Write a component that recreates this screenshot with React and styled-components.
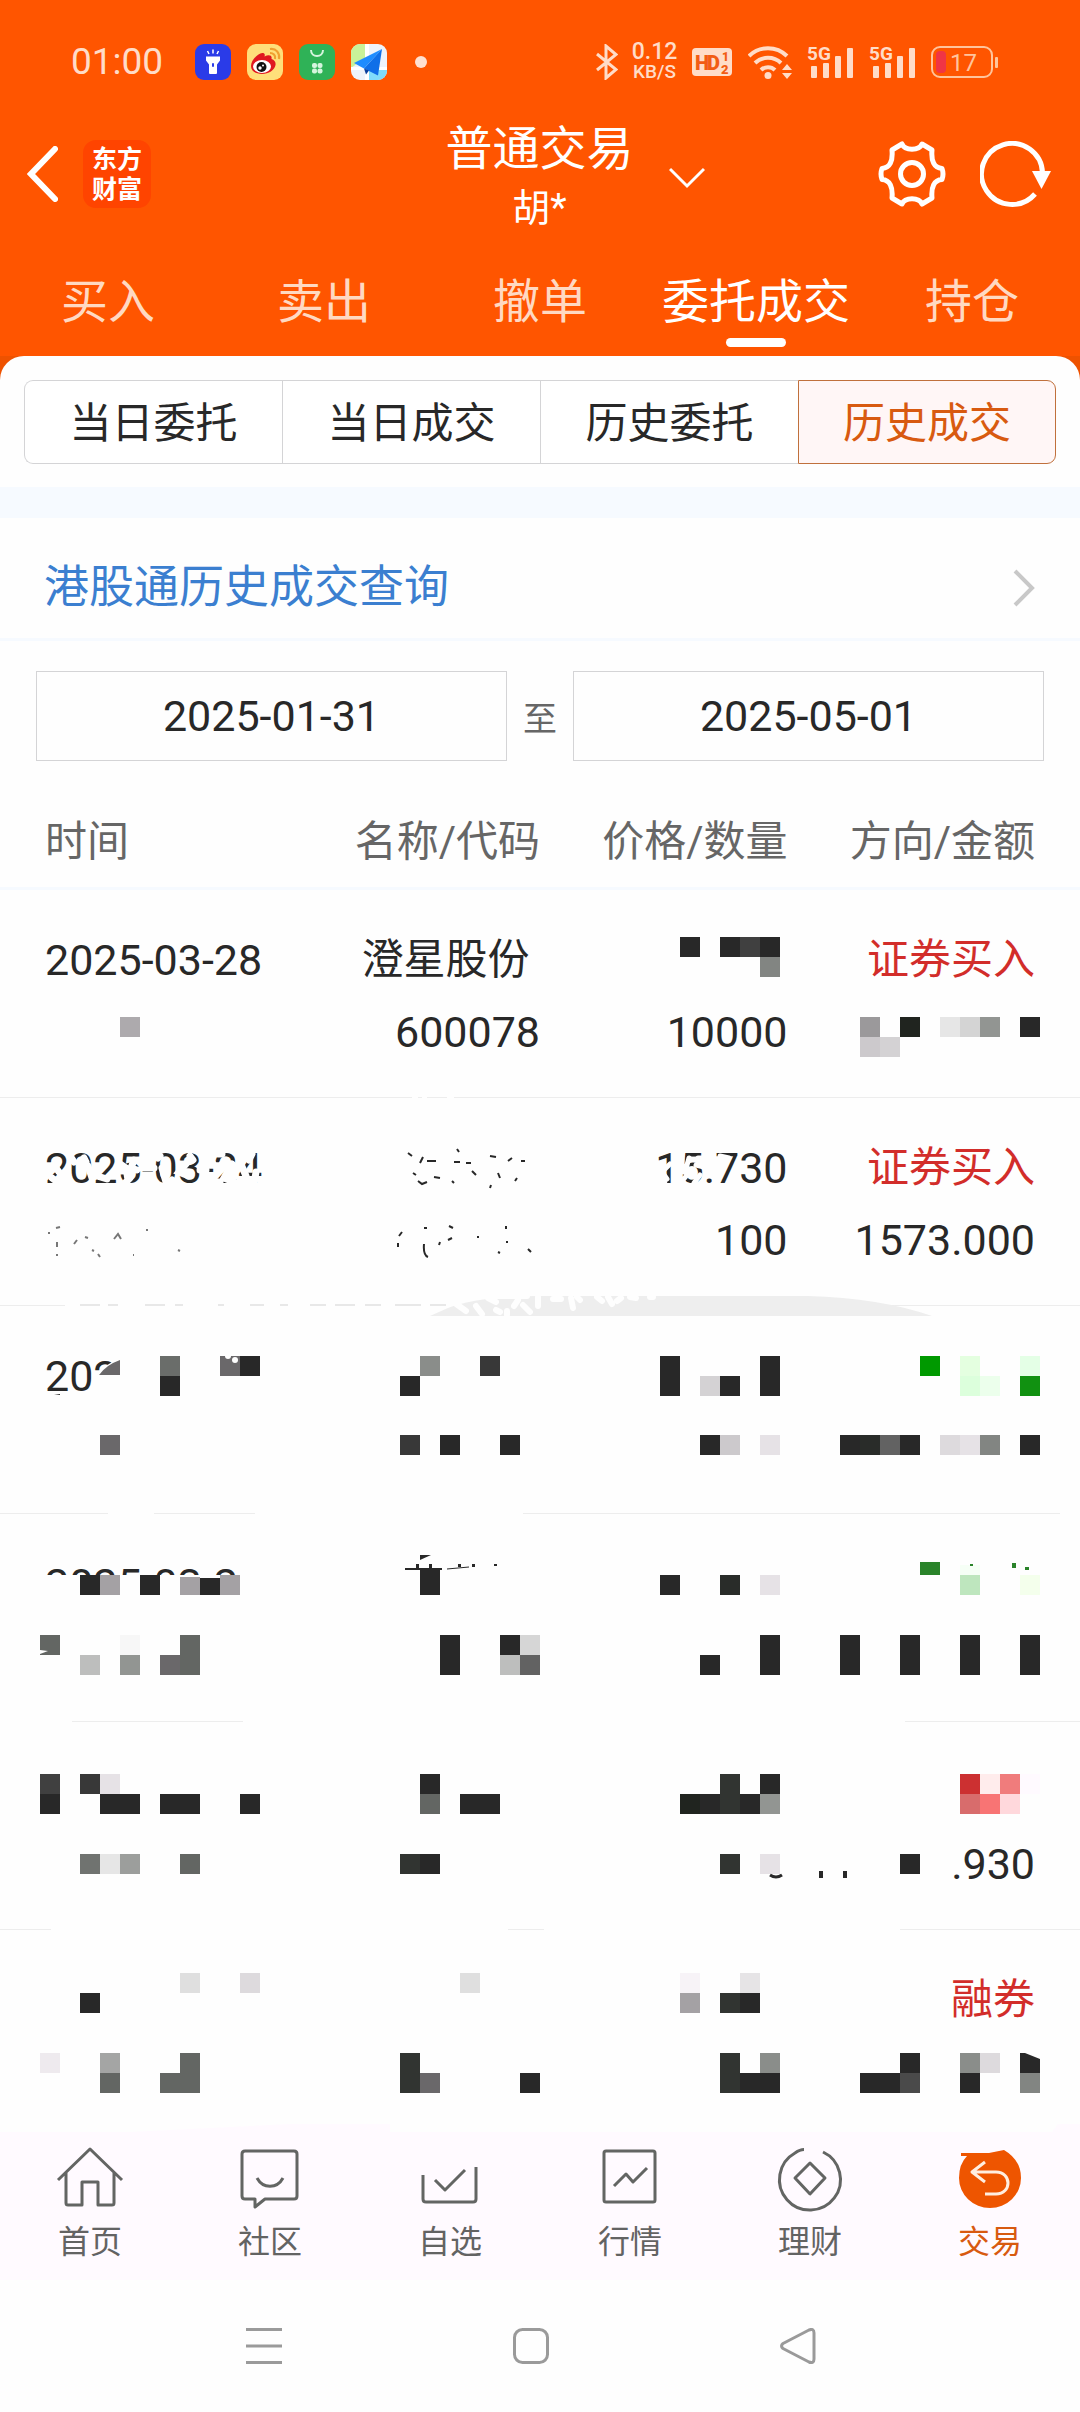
import React, { useState } from 'react';
import styled, { createGlobalStyle } from 'styled-components';

const GlobalStyle = createGlobalStyle`
  * {
    box-sizing: border-box;
  }

  body {
    margin: 0;
    background: #fefefe;
    font-family: Roboto, 'Noto Sans CJK SC', sans-serif;
    color: #282828;
  }

  button, input {
    font-family: inherit;
    color: inherit;
    border: 0;
    padding: 0;
    margin: 0;
    background: none;
  }

  svg {
    display: block;
    flex: none;
  }
`;

const Page = styled.div`
  min-height: 100vh;
  display: flex;
  flex-direction: column;
`;

const Header = styled.header`
  background: #ff5500;
  color: #fff;
`;

const StatusBar = styled.div`
  height: 124px;
  padding: 0 82px 0 71px;
  display: flex;
  align-items: center;
  justify-content: space-between;
  color: #ffdcc8;
`;

const StatusGroup = styled.div`
  display: flex;
  align-items: center;
  gap: ${props => props.$tight ? '15px' : '16px'};
`;

const Clock = styled.span`
  width: 108px;
  font-size: 37px;
  line-height: 44px;
`;

const MoreDot = styled.span`
  width: 12px;
  height: 12px;
  margin-left: 12px;
  border-radius: 50%;
  background: #ffe0d0;
`;

const NetSpeed = styled.span`
  width: 43px;
  display: flex;
  flex-direction: column;
  align-items: center;
  font-size: 23px;
  font-weight: 500;
  line-height: 20px;

  small {
    font-size: 19px;
    line-height: 20px;
  }
`;

const TitleBar = styled.div`
  height: 100px;
  padding: 0 28px 0 27px;
  display: grid;
  grid-template-columns: 1fr auto 1fr;
  grid-template-rows: 100px;
  align-items: center;
`;

const TitleSide = styled.div`
  display: flex;
  align-items: center;
  justify-content: ${props => props.$end ? 'flex-end' : 'flex-start'};
  gap: ${props => props.$end ? '34px' : '25px'};
`;

const IconButton = styled.button`
  display: block;
  cursor: pointer;
`;

const Logo = styled.span`
  width: 68px;
  height: 68px;
  padding-top: 5px;
  border-radius: 13px;
  background: #ff4400;
  font-size: 25px;
  font-weight: 700;
  line-height: 30px;
  text-align: center;
`;

const AccountButton = styled.button`
  display: flex;
  align-items: center;
  gap: 35px;
  padding: 8px 0 0 71px;
`;

const AccountText = styled.span`
  display: flex;
  flex-direction: column;
  font-size: 47px;
  line-height: 60px;

  small {
    font-size: 38px;
    line-height: 58px;
  }
`;

const Tabs = styled.nav`
  display: grid;
  grid-template-columns: repeat(5, 1fr);
  padding: 46px 0 9px;
`;

const Tab = styled.a`
  display: flex;
  flex-direction: column;
  align-items: center;
  gap: 4px;
  color: ${props => props.$active ? '#fff' : '#ffd9c2'};
  font-size: 47px;
  line-height: 64px;
  text-decoration: none;

  &::after {
    content: '';
    width: 60px;
    height: 9px;
    border-radius: 5px;
    background: ${props => props.$active ? '#fff' : 'transparent'};
  }
`;

const PanelBack = styled.div`
  background: #ee5200;
`;

const Panel = styled.div`
  padding: 24px 24px 23px;
  border-radius: 24px 24px 0 0;
  background: #fefefe;
`;

const Segments = styled.div`
  display: grid;
  grid-template-columns: repeat(4, 1fr);
`;

const Segment = styled.button`
  height: 84px;
  padding-top: 4px;
  border: 1px solid ${props => props.$active ? '#c0703c' : '#d4d4d6'};
  border-right-width: ${props => props.$last ? '1px' : '0'};
  border-radius: ${props => props.$first ? '9px 0 0 9px' : props.$last ? '0 9px 9px 0' : '0'};
  background: ${props => props.$active ? '#fff6f6' : '#fff'};
  color: ${props => props.$active ? '#d85a10' : '#282828'};
  font-size: 42px;
  line-height: 60px;
`;

const Band = styled.div`
  height: 31px;
  background: #f6faff;
`;

const HkLink = styled.a`
  display: flex;
  align-items: center;
  justify-content: space-between;
  height: 123px;
  padding: 20px 44px 0;
  border-bottom: 3px solid #f6faff;
  color: #3b7fd0;
  font-size: 45px;
  line-height: 64px;
  text-decoration: none;
`;

const DateRange = styled.div`
  display: flex;
  align-items: center;
  gap: 16px;
  padding: 30px 36px;
  color: #666;
  font-size: 34px;
`;

const DateInput = styled.input`
  flex: 1;
  min-width: 0;
  height: 90px;
  border: 1px solid #d4d4d6;
  color: #282828;
  font-size: 43px;
  text-align: center;
`;

const Trades = styled.table`
  display: block;
  width: 100%;
  flex: 1;

  thead, tbody {
    display: block;
  }
`;

const HeadRow = styled.tr`
  display: grid;
  grid-template-columns: repeat(4, 1fr);
  align-items: center;
  height: 99px;
  padding: 6px 45px 0;
  border-bottom: 3px solid #f6faff;
`;

const HeadCell = styled.th`
  padding: 0;
  color: #666;
  font-size: 42px;
  font-weight: 400;
  line-height: 60px;
  text-align: ${props => props.$left ? 'left' : 'right'};
  white-space: nowrap;
`;

const TradeRow = styled.tr`
  position: relative;
  display: grid;
  grid-template-columns: repeat(4, 1fr);
  height: ${props => props.$last ? '202px' : '208px'};
  padding: 34px 45px 0;
  border-bottom: ${props => props.$last ? '0' : '1px solid #ededed'};
`;

const Cell = styled.td`
  display: flex;
  flex-direction: column;
  padding: 0;
  font-size: 43px;
  line-height: 72px;
  text-align: ${props => props.$left ? 'left' : 'right'};
  white-space: nowrap;
`;

const Line = styled.span`
  height: 72px;
  font-size: ${props => props.$cjk ? '42px' : '43px'};
  color: ${props => props.$buy ? '#d22d2a' : '#282828'};
`;

const Cover = styled.svg`
  position: absolute;
  top: 0;
  left: 0;
  width: 100%;
  height: 208px;
  overflow: visible;
  pointer-events: none;
`;

const BottomNav = styled.nav`
  display: grid;
  grid-template-columns: repeat(6, 1fr);
  height: 148px;
  background: #fffaff;
`;

const NavItem = styled.a`
  display: flex;
  flex-direction: column;
  align-items: center;
  padding-top: 10px;
  color: ${props => props.$active ? '#d85a10' : '#636363'};
  font-size: 32px;
  line-height: 56px;
  text-decoration: none;
`;

const SystemNav = styled.div`
  display: flex;
  align-items: center;
  justify-content: center;
  gap: 231px;
  height: 132px;
  padding-right: 18px;
`;

/* ---------- status bar icons ---------- */

const TorchApp = () => (
  <svg width="36" height="36" viewBox="0 0 36 36">
    <rect width="36" height="36" rx="9" fill="#2a3be8" />
    <path d="M11 12.500h14v4l-3 4v8.500a1 1 0 0 1-1 1h-6a1 1 0 0 1-1-1v-8.500l-3-4z" fill="#fff" />
    <path d="M18 5.500v4M12.500 7l1.500 3M23.500 7L22 10" stroke="#fff" strokeWidth="1.500" />
    <rect x="17" y="19" width="2" height="4" rx="1" fill="#2a3be8" />
  </svg>
);

const WeiboApp = () => (
  <svg width="36" height="36" viewBox="0 0 36 36">
    <rect width="36" height="36" rx="9" fill="#ffdf7a" />
    <path d="M23 5c6-1 10 4 9 10M23 9c3 0 6 2 5 6" fill="none" stroke="#f0a030" strokeWidth="2.200" />
    <path d="M4 22c0-6 8-14 12-13 2 .500 2 2 1.500 3.500 4-2 8-1.500 7 2.500 3 1 4.500 3 4 6-.700 5-7 9-13.500 9S4 27 4 22z" fill="#e01820" />
    <ellipse cx="15" cy="22.500" rx="9" ry="6.500" fill="#fff" />
    <circle cx="14.500" cy="23" r="5" fill="#111" />
    <circle cx="13" cy="24" r="1.700" fill="#fff" />
    <circle cx="16" cy="21.500" r="1" fill="#fff" />
  </svg>
);

const MarketApp = () => (
  <svg width="36" height="36" viewBox="0 0 36 36">
    <rect width="36" height="36" rx="9" fill="#2fb257" />
    <path d="M12 6c0 8 12 8 12 0" fill="none" stroke="#d5f5dd" strokeWidth="2" />
    <g fill="#d5f5dd">
      <rect x="13" y="19" width="5" height="5" rx="2" />
      <rect x="18.500" y="19" width="5" height="5" rx="2" />
      <rect x="13" y="24.500" width="5" height="5" rx="2" />
      <rect x="18.500" y="24.500" width="5" height="5" rx="2" />
    </g>
  </svg>
);

const MapApp = () => (
  <svg width="36" height="36" viewBox="0 0 36 36">
    <rect width="36" height="36" rx="9" fill="#eef3fa" />
    <path d="M9 0h5v14L0 24V9a9 9 0 0 1 9-9z" fill="#c9f299" />
    <path d="M18 26h18v1a9 9 0 0 1-9 9h-9z" fill="#7fdcfb" />
    <path d="M14 0h4v36h-4zM0 23h36v3H0z" fill="#fff" />
    <path d="M31 5L3 19l10 5.500z" fill="#1e8cff" />
    <path d="M31 5L13 24.500l14 7z" fill="#0f6fe8" />
    <path d="M13 24.500l2 6 3-4z" fill="#0a3f9c" />
  </svg>
);

const Bluetooth = () => (
  <svg width="22" height="36" viewBox="0 0 22 36" fill="none" stroke="currentColor" strokeWidth="3">
    <path d="M1 10l19 15.500-10 8.500V2l10 8.500L1 26" />
  </svg>
);

const HdBadge = () => (
  <svg width="42" height="30" viewBox="0 0 42 30">
    <rect x="1" y="1" width="40" height="28" rx="4" fill="currentColor" />
    <g fill="#f25c14" fontFamily="Roboto" fontWeight="900">
      <text x="4" y="23" fontSize="20">H</text>
      <text x="16" y="23" fontSize="20">D</text>
      <text x="31" y="14" fontSize="12">1</text>
      <text x="30" y="27" fontSize="13">2</text>
    </g>
  </svg>
);

const Wifi = () => (
  <svg width="44" height="36" viewBox="0 0 44 36" fill="none" stroke="currentColor" strokeWidth="4">
    <path d="M1 12a27 27 0 0 1 38 0" />
    <path d="M7 19a19 19 0 0 1 26 0" />
    <path d="M13 26a10 10 0 0 1 14 0" />
    <circle cx="20" cy="31.500" r="3.500" fill="currentColor" stroke="none" />
    <path d="M34 26l5-6 5 6zM34 29l5 6 5-6z" fill="currentColor" stroke="none" />
  </svg>
);

const Signal = () => (
  <svg width="47" height="40" viewBox="0 0 47 40" fill="currentColor">
    <text x="0" y="18" fontSize="19" fontWeight="700" fontFamily="Roboto">5G</text>
    <rect x="4" y="24" width="6" height="12" rx="1" />
    <rect x="16" y="21" width="6" height="15" rx="1" />
    <rect x="28" y="14" width="6" height="22" rx="1" />
    <rect x="40" y="6" width="6" height="30" rx="1" />
  </svg>
);

const Battery = () => (
  <svg width="67" height="32" viewBox="0 0 67 32">
    <rect x="1" y="1" width="60" height="30" rx="8" fill="none" stroke="#ffc49c" strokeWidth="2" />
    <rect x="64" y="11" width="3" height="11" rx="1" fill="#ffc49c" />
    <rect x="5" y="5" width="10" height="22" rx="4" fill="#f03545" />
    <text x="19" y="25" fontSize="24" fontFamily="Roboto" fill="#ffc49c">17</text>
  </svg>
);

/* ---------- title bar icons ---------- */

const BackIcon = () => (
  <svg width="31" height="56" viewBox="0 0 31 56">
    <path d="M28 3L4 28l24 25" fill="none" stroke="#fff" strokeWidth="6" strokeLinecap="round" />
  </svg>
);

const DownIcon = () => (
  <svg width="36" height="22" viewBox="0 0 36 22">
    <path d="M1 2l17 17L35 2" fill="none" stroke="#fff" strokeWidth="3" />
  </svg>
);

const GearIcon = () => (
  <svg width="68" height="66" viewBox="0 0 68 66" fill="none" stroke="#fff" strokeWidth="5" strokeLinejoin="round">
    <path d="M24 3C27 10 41 10 44 3L54 9C53 20 56 27 64 27.500Q66 33 64 38.500C56 39 53 46 54 57L44 63C41 56 27 56 24 63L14 57C15 46 12 39 4 38.500Q2 33 4 27.500C12 27 15 20 14 9Z" />
    <circle cx="34" cy="33" r="11.500" />
  </svg>
);

const RefreshIcon = () => (
  <svg width="72" height="66" viewBox="0 0 72 66">
    <path d="M55 53A30.500 30.500 0 1 1 62.500 32" fill="none" stroke="#fff" strokeWidth="5" />
    <path d="M52 30h19L61.500 48z" fill="#fff" />
  </svg>
);

const RightIcon = () => (
  <svg width="24" height="38" viewBox="0 0 24 38">
    <path d="M3 2l17 17L3 36" fill="none" stroke="#c8c8c8" strokeWidth="4" />
  </svg>
);

/* ---------- bottom nav icons ---------- */

const NavIcon = ({ children }) => (
  <svg width="72" height="72" viewBox="0 0 72 72" fill="none" stroke="#636563" strokeWidth="3" strokeLinejoin="round">
    {children}
  </svg>
);

const navItems = [
  {
    label: '首页',
    icon: (
      <NavIcon>
        <path d="M4 38L36 7l32 31M12 31v30q0 2 2 2h14V40h16v23h14q2 0 2-2V31" />
      </NavIcon>
    ),
  },
  {
    label: '社区',
    icon: (
      <NavIcon>
        <path d="M11 9h49q3 0 3 3v42q0 3-3 3H31l-10 8v-8H11q-3 0-3-3V12q0-3 3-3z" />
        <path d="M23 36c6 11 20 11 26 0" />
      </NavIcon>
    ),
  },
  {
    label: '自选',
    icon: (
      <NavIcon>
        <path d="M9 33v24q0 3 3 3h47q3 0 3-3V25M21 38l10 10 20-20" />
      </NavIcon>
    ),
  },
  {
    label: '行情',
    icon: (
      <NavIcon>
        <rect x="10" y="9" width="51" height="51" rx="2" />
        <path d="M20 44l12-12 7 8 14-14" />
      </NavIcon>
    ),
  },
  {
    label: '理财',
    icon: (
      <NavIcon>
        <path d="M30 7.500q-4 0-9 3.500A30.500 30.500 0 1 0 49 10" />
        <path d="M36 21l15 15-15 16-15-16z" />
      </NavIcon>
    ),
  },
  {
    label: '交易',
    active: true,
    icon: (
      <NavIcon>
        <path d="M7 11h28l15-3Q67 18 67 36A31 30 0 0 1 5 36Q5 22 13 14H7z" fill="#ee5500" stroke="none" />
        <path d="M31 20L18 30l13 10M18 30h24c16 0 16 22 0 22H31" stroke="#ffeee0" />
      </NavIcon>
    ),
  },
];

/* ---------- table data ---------- */

const D = '#282828';
const W = '#fefefe';

// cover: [x, y, colour, width, height], 20px squares by default
const trades = [
  {
    time: ['2025-03-28'],
    name: ['澄星股份\u00a0', '600078'],
    price: ['', '10000'],
    side: ['证券买入'],
    cover: [
      [120, 127, '#adaaad'],
      [680, 47, D], [720, 47, D], [740, 47, '#404040'], [760, 47, D], [760, 67, '#828582'],
      [860, 127, '#9b999b'], [900, 127, '#20241f'], [940, 127, '#e6e6e6'], [960, 127, '#d4d4d4'],
      [980, 127, '#929592'], [1020, 127, D], [860, 147, '#ccc9cc'], [880, 147, '#d4d2d4'],
      [412, 206, W, 6, 3], [422, 206, W, 5, 3], [447, 206, W, 7, 3],
    ],
  },
  {
    time: ['2025-03-24'],
    name: [],
    price: ['15.730', '100'],
    side: ['证券买入', '1573.000'],
    cover: [[65, 206, W, 400, 3]],
    extra: (
      <>
        <g fill="none" stroke={W} strokeWidth="7" strokeLinecap="round">
          <path d="M46 74l10-4 3 4M52 80l8 6M70 58l4 6M66 84l-4-4M88 68l4 12M84 60l2 4M97 78l10 3M120 66l6 4 2 12M134 62l-3 8 6 2M126 84l4-4M142 70l12 0M162 70l4 14M158 60l2-2M172 82l-6 6M186 66l-7 8 10 4M190 58l3 4M204 66h9M206 72l-6 0M222 66l6 4M232 66l-8 14 10 4M216 84h4M240 64l6 14M252 56l-3 6M256 74l-2 12M246 88l-4-2M218 56l4 0" />
          <path d="M670 66l-8 8 5 7M682 56v12M683 82l8-10M689 60l-4 14M696 67l8 2M700 77l-6 8M706 60l-8 0M664 86l2-6M720 58l9 2" strokeWidth="5" />
        </g>
        <g fill="none" stroke={D} strokeWidth="2">
          <path d="M408 55l4 3M420 65l3-6M427 63h9M413 75l3 2M418 83l4 3 5-2M434 79l6 1M457 51l2 3M454 64h6M466 65h5M472 73l4 4M452 83l2 2M490 58l6 1M498 75l2 5M508 63l4-3M521 63l4 0M491 87l-1 3M515 83l2-3" />
          <path d="M402 134l-3 4M398 145v4M424 146q-1 11 4 13M449 128l4 2M448 142l4-2M439 147l1-3M424 130h3M478 138v2M506 128v3M507 143v2M498 154l2 1M528 151l3 3" />
          <path stroke="#777" d="M56 130l4-1M49 134v2M57 144v5M57 156v2M74 146l3-4M85 139l3 1M98 156l2 3M114 141l4-5 3 5M92 152l2 1M133 157h1M178 152l2 1M146 132h2" />
          <path stroke="#e8e8e8" d="M80 207h20M108 207h10M145 207h20M175 207h8M218 207h6M250 207h14M280 207h8M310 207h16M335 207h20M365 207h16M395 207h26M430 207h16" />
        </g>
        <path d="M448 210Q480 198 540 198H808Q880 200 932 218H430z" fill="#eeeeee" />
        <g fill="none" stroke={W} strokeWidth="6" strokeLinecap="round">
          <path d="M424 215l12-4M452 203l14 10M476 208l6 8M488 200l8 4M496 212l4 2M507 217v-4M518 202l-4 6M523 207l7 7M538 199v9M553 201h8M571 200l2 10M577 199l3 3M597 199l5 4M608 199l4 7M617 203l4-3M630 199l6 1M650 199h3M467 198h60" />
        </g>
      </>
    ),
  },
  {
    time: ['202'],
    name: [],
    price: [],
    side: [],
    cover: [
      [160, 50, '#6a6d6a'], [160, 70, D], [220, 50, '#6a686a'], [240, 50, D], [100, 129, '#6a686a'],
      [420, 50, '#8a8d8a'], [480, 50, '#383838'], [400, 70, D], [400, 129, '#383838'], [440, 129, D], [500, 129, D],
      [660, 50, D, 20, 40], [700, 70, '#d4d2d4'], [720, 70, D], [760, 50, D, 20, 40],
      [700, 129, D], [720, 129, '#ccc9cc'], [760, 129, '#e6e2e6'],
      [920, 50, '#009900'], [960, 50, '#e4ffe0'], [960, 70, '#dcffdc'], [980, 70, '#ecffec'],
      [1020, 50, '#e4ffe6'], [1020, 70, '#119111'],
      [840, 129, D], [860, 129, '#292c29'], [880, 129, '#626262'], [900, 129, D],
      [940, 129, '#dddadd'], [960, 129, '#e6e2e6'], [980, 129, '#828582'], [1020, 129, D],
      [108, 206, W, 46, 3], [255, 206, W, 268, 3], [1060, 206, W, 20, 3],
    ],
    extra: (
      <>
        <path d="M97 70Q106 57 122 51V92H93V70z" fill={W} />
        <path d="M99 69Q106 59 120 54V69z" fill="#6a686a" />
        <circle cx="235" cy="54" r="3" fill={W} />
        <circle cx="228" cy="50" r="3" fill={W} />
        <path d="M54 89l6-1v1z" fill={D} />
      </>
    ),
  },
  {
    time: ['2025-03-2'],
    name: [],
    price: [],
    side: [],
    cover: [
      [40, 61, W, 210, 30],
      [80, 61, D], [100, 61, '#a4a1a4'], [140, 61, D], [180, 63, '#a4a1a4', 20, 18], [200, 64, D, 20, 17], [220, 61, '#a4a1a4'],
      [40, 121, '#636663'], [120, 121, '#f7f7f7'], [180, 121, '#636663', 20, 40],
      [80, 141, '#bdbebd'], [120, 141, '#929592'], [160, 141, '#6a686a'],
      [420, 56, D, 20, 25], [440, 121, D, 20, 40], [500, 121, D], [520, 121, '#d6d6d6'], [500, 141, '#bdbebd'], [520, 141, '#626262'],
      [405, 54, D, 37, 2], [416, 50, D, 3, 5], [429, 50, D, 3, 5], [458, 50, D, 3, 3], [472, 50, D, 3, 3], [494, 50, D, 3, 2],
      [660, 61, D], [720, 61, '#292c29'], [760, 61, '#e6e2e6'], [700, 141, D], [760, 121, D, 20, 40],
      [920, 48, '#2a832a', 20, 13], [960, 51, '#f6fff6', 20, 10], [960, 61, '#bee6be'], [1020, 61, '#f4ffec'],
      [1012, 49, '#2a832a', 4, 5], [1025, 53, '#2a832a', 4, 3], [970, 50, '#2a832a', 3, 2],
      [840, 121, D, 20, 40], [900, 121, D, 20, 40], [960, 121, D, 20, 40], [1020, 121, D, 20, 40],
      [0, 206, W, 72, 3], [243, 206, W, 662, 3],
    ],
    extra: (
      <>
        <path d="M420 41h11l-11 5z" fill={D} />
        <path d="M447 55l22-2" stroke={D} strokeWidth="1" />
        <path d="M40 136l8 1-8 3z" fill={W} />
      </>
    ),
  },
  {
    time: [],
    name: [],
    price: [],
    side: ['', '.930'],
    cover: [
      [40, 52, '#404040'], [40, 72, D], [80, 52, '#383838'], [100, 52, '#e6e2e6'],
      [100, 72, D, 40], [160, 72, D, 40], [240, 72, D],
      [80, 132, '#707370'], [100, 132, '#e6e6e6'], [120, 132, '#9c9e9c'], [180, 132, '#636663'],
      [420, 52, D], [420, 72, '#636663'], [460, 72, D, 40], [400, 132, '#313431'], [420, 132, D],
      [680, 72, '#20241f'], [700, 72, D], [720, 52, '#313431', 20, 40], [740, 72, D], [760, 52, D], [760, 72, '#929592'],
      [720, 132, '#313431'], [760, 132, '#e6e2e6'], [900, 132, D],
      [960, 52, '#cc3031'], [980, 52, '#ffecec'], [1000, 52, '#f07c7c'],
      [960, 72, '#d86c6c'], [980, 72, '#f87474'], [1000, 72, '#ffd8dc'], [1020, 52, '#fffaff'],
      [819, 149, D, 4, 7], [843, 149, D, 4, 7],
      [51, 206, W, 457, 3], [544, 206, W, 356, 3],
    ],
    extra: <path d="M770 153q6 4 12 0" fill="none" stroke={D} strokeWidth="3" />,
  },
  {
    time: [],
    name: [],
    price: [],
    side: ['融券'],
    cover: [
      [180, 43, '#dfdfdf'], [240, 43, '#dddadd'], [80, 63, D],
      [40, 123, '#eeeaee'], [100, 123, '#a4a5a4'], [100, 143, '#636663'], [180, 123, '#636663', 20, 40], [160, 143, '#636663'],
      [460, 43, '#dfdfdf'], [400, 123, '#313431', 20, 40], [420, 143, '#6a686a'], [520, 143, D],
      [680, 43, '#f7f3f7'], [680, 63, '#a4a1a4'], [720, 63, '#313431'], [740, 63, D], [740, 43, '#e6e4e6'],
      [720, 123, '#313431', 20, 40], [740, 143, D, 40], [760, 123, '#8a8d8a'],
      [900, 123, D], [860, 143, D, 40], [900, 143, '#4a4a4a'],
      [960, 123, '#8a8d8a'], [980, 123, '#dddadd'], [960, 143, D], [1020, 143, '#828582'],
    ],
    extra: (
      <>
        <path d="M1020 123h5l15 6v14h-20z" fill={D} />
        <path d="M130 202L290 194h100v8zM1052 202l6-8h22v8z" fill="#fffaff" />
      </>
    ),
  },
];

const isCjk = text => /[\u4e00-\u9fff]/.test(text);

const TradeCell = ({ lines, left }) => (
  <Cell $left={left}>
    {lines.map((text, i) => (
      <Line key={i} $cjk={isCjk(text)}>{text}</Line>
    ))}
  </Cell>
);

const tabs = ['买入', '卖出', '撤单', '委托成交', '持仓'];
const segments = ['当日委托', '当日成交', '历史委托', '历史成交'];

export default function App() {
  const [tab, setTab] = useState(3);
  const [segment, setSegment] = useState(3);
  const [from, setFrom] = useState('2025-01-31');
  const [to, setTo] = useState('2025-05-01');

  return (
    <Page>
      <GlobalStyle />
      <Header>
        <StatusBar>
          <StatusGroup>
            <Clock>01:00</Clock>
            <TorchApp />
            <WeiboApp />
            <MarketApp />
            <MapApp />
            <MoreDot />
          </StatusGroup>
          <StatusGroup $tight>
            <Bluetooth />
            <NetSpeed>0.12<small>KB/S</small></NetSpeed>
            <HdBadge />
            <Wifi />
            <Signal />
            <Signal />
            <Battery />
          </StatusGroup>
        </StatusBar>
        <TitleBar>
          <TitleSide>
            <IconButton aria-label="返回"><BackIcon /></IconButton>
            <Logo>东方<br />财富</Logo>
          </TitleSide>
          <AccountButton>
            <AccountText>普通交易<small>胡*</small></AccountText>
            <DownIcon />
          </AccountButton>
          <TitleSide $end>
            <IconButton aria-label="设置"><GearIcon /></IconButton>
            <IconButton aria-label="刷新"><RefreshIcon /></IconButton>
          </TitleSide>
        </TitleBar>
        <Tabs>
          {tabs.map((label, i) => (
            <Tab key={label} href="#" $active={i === tab} onClick={() => setTab(i)}>{label}</Tab>
          ))}
        </Tabs>
      </Header>
      <PanelBack>
        <Panel>
          <Segments>
            {segments.map((label, i) => (
              <Segment
                key={label}
                $first={i === 0}
                $last={i === segments.length - 1}
                $active={i === segment}
                onClick={() => setSegment(i)}
              >
                {label}
              </Segment>
            ))}
          </Segments>
        </Panel>
      </PanelBack>
      <Band />
      <HkLink href="#">港股通历史成交查询<RightIcon /></HkLink>
      <DateRange>
        <DateInput aria-label="开始日期" value={from} onChange={e => setFrom(e.target.value)} />
        至
        <DateInput aria-label="结束日期" value={to} onChange={e => setTo(e.target.value)} />
      </DateRange>
      <Trades>
        <thead>
          <HeadRow>
            <HeadCell $left>时间</HeadCell>
            <HeadCell>名称/代码</HeadCell>
            <HeadCell>价格/数量</HeadCell>
            <HeadCell>方向/金额</HeadCell>
          </HeadRow>
        </thead>
        <tbody>
          {trades.map((trade, i) => (
            <TradeRow key={i} $last={i === trades.length - 1}>
              <TradeCell lines={trade.time} left />
              <TradeCell lines={trade.name} />
              <TradeCell lines={trade.price} />
              <Cell>
                {trade.side.map((text, n) => (
                  <Line key={n} $cjk={isCjk(text)} $buy={n === 0}>{text}</Line>
                ))}
                <Cover viewBox="0 0 1080 208" preserveAspectRatio="none" aria-hidden="true">
                  {trade.cover.map(([x, y, fill, w = 20, h = 20], n) => (
                    <rect key={n} x={x} y={y} width={w} height={h} fill={fill} />
                  ))}
                  {trade.extra}
                </Cover>
              </Cell>
            </TradeRow>
          ))}
        </tbody>
      </Trades>
      <BottomNav>
        {navItems.map(item => (
          <NavItem key={item.label} href="#" $active={item.active}>
            {item.icon}
            {item.label}
          </NavItem>
        ))}
      </BottomNav>
      <SystemNav>
        <IconButton aria-label="菜单">
          <svg width="36" height="36" viewBox="0 0 36 36" stroke="#9a9a9a" strokeWidth="3">
            <path d="M0 1.500h36M0 18h36M0 34.500h36" />
          </svg>
        </IconButton>
        <IconButton aria-label="主页">
          <svg width="36" height="36" viewBox="0 0 36 36" fill="none" stroke="#9a9a9a" strokeWidth="3">
            <rect x="1.500" y="1.500" width="33" height="33" rx="8" />
          </svg>
        </IconButton>
        <IconButton aria-label="后退">
          <svg width="36" height="36" viewBox="0 0 36 36" fill="none" stroke="#9a9a9a" strokeWidth="3" strokeLinejoin="round">
            <path d="M29 2L3 15.500q-3 2.500 0 5L29 34q5 2 5-3V5q0-5-5-3z" />
          </svg>
        </IconButton>
      </SystemNav>
    </Page>
  );
}
